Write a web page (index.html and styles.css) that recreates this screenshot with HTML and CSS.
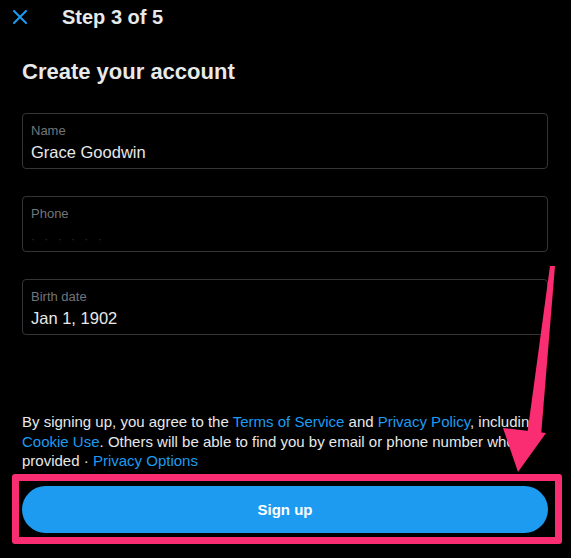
FILE: index.html
```html
<!DOCTYPE html>
<html lang="en">
<head>
<meta charset="utf-8">
<title>Create your account</title>
<link rel="stylesheet" href="styles.css">
</head>
<body>
<div class="screen">
  <header class="topbar">
    <svg class="close" viewBox="0 0 14 14" width="14" height="14" aria-hidden="true">
      <path d="M1 1 L13 13 M13 1 L1 13" stroke="#1d9bf0" stroke-width="2" stroke-linecap="round"/>
    </svg>
    <span class="step">Step 3 of 5</span>
  </header>
  <main class="content">
    <h1 class="title">Create your account</h1>
    <div class="field">
      <span class="label">Name</span>
      <span class="value">Grace Goodwin</span>
    </div>
    <div class="field">
      <span class="label">Phone</span>
      <span class="value redacted">&middot; &middot; &middot; &middot; &middot; &middot;</span>
    </div>
    <div class="field">
      <span class="label">Birth date</span>
      <span class="value">Jan 1, 1902</span>
    </div>
    <p class="legal">By signing up, you agree to the <span class="link">Terms of Service</span> and <span class="link">Privacy Policy</span>, including <span class="link">Cookie Use</span>. Others will be able to find you by email or phone number where provided &middot; <span class="link">Privacy Options</span></p>
    <button class="signup">Sign up</button>
  </main>
  <div class="highlight"></div>
  <svg class="arrow" viewBox="0 0 571 558" width="571" height="558" aria-hidden="true">
    <polygon points="550,266 555,266 541,436 527,436" fill="#fa2d72"/>
    <polygon points="503,428 546,433 518,472" fill="#fa2d72"/>
  </svg>
</div>
</body>
</html>
```

FILE: styles.css
```css
* { box-sizing: border-box; }

html, body {
  margin: 0;
  padding: 0;
  background: #000;
}

body {
  font-family: "Liberation Sans", Arial, sans-serif;
  color: #e7e9ea;
}

.screen {
  position: relative;
  width: 571px;
  height: 558px;
  overflow: hidden;
  background: #000;
}

.topbar {
  display: flex;
  align-items: center;
  height: 34px;
  padding-left: 13px;
}

.close {
  display: block;
  flex: none;
  margin-top: -1px;
}

.step {
  margin-left: 35px;
  font-size: 20px;
  font-weight: 700;
  line-height: 24px;
  color: #e7e9ea;
}

.content {
  display: flex;
  flex-direction: column;
  padding: 0 23px 0 22px;
}

.title {
  margin: 24px 0 27px 0;
  font-size: 22px;
  line-height: 28px;
  font-weight: 700;
  color: #e7e9ea;
}

.field {
  display: flex;
  flex-direction: column;
  height: 56px;
  border: 1px solid #333639;
  border-radius: 4px;
  padding: 9px 9px 0 8px;
  margin-bottom: 27px;
}

.field:nth-of-type(3) {
  margin-bottom: 0;
}

.label {
  font-size: 13px;
  line-height: 16px;
  color: #71767b;
}

.value {
  margin-top: 2px;
  font-size: 16.5px;
  line-height: 22px;
  color: #e7e9ea;
}

.redacted {
  color: #2b2d2f;
  letter-spacing: 3px;
  margin-top: 6px;
  font-size: 12px;
}

.legal {
  margin: 77px -6px 0 0;
  font-size: 15px;
  line-height: 19.5px;
  color: #e7e9ea;
}

.link {
  color: #1d9bf0;
}

.signup {
  margin-top: 15px;
  height: 47px;
  width: 100%;
  border: 0;
  border-radius: 24px;
  background: #1d9bf0;
  color: #fff;
  font-family: "Liberation Sans", Arial, sans-serif;
  font-size: 15px;
  font-weight: 700;
}

.highlight {
  position: absolute;
  left: 12px;
  top: 474px;
  width: 550px;
  height: 70px;
  border: 7px solid #fa2d72;
  border-radius: 3px;
}

.arrow {
  position: absolute;
  left: 0;
  top: 0;
  pointer-events: none;
}
```
